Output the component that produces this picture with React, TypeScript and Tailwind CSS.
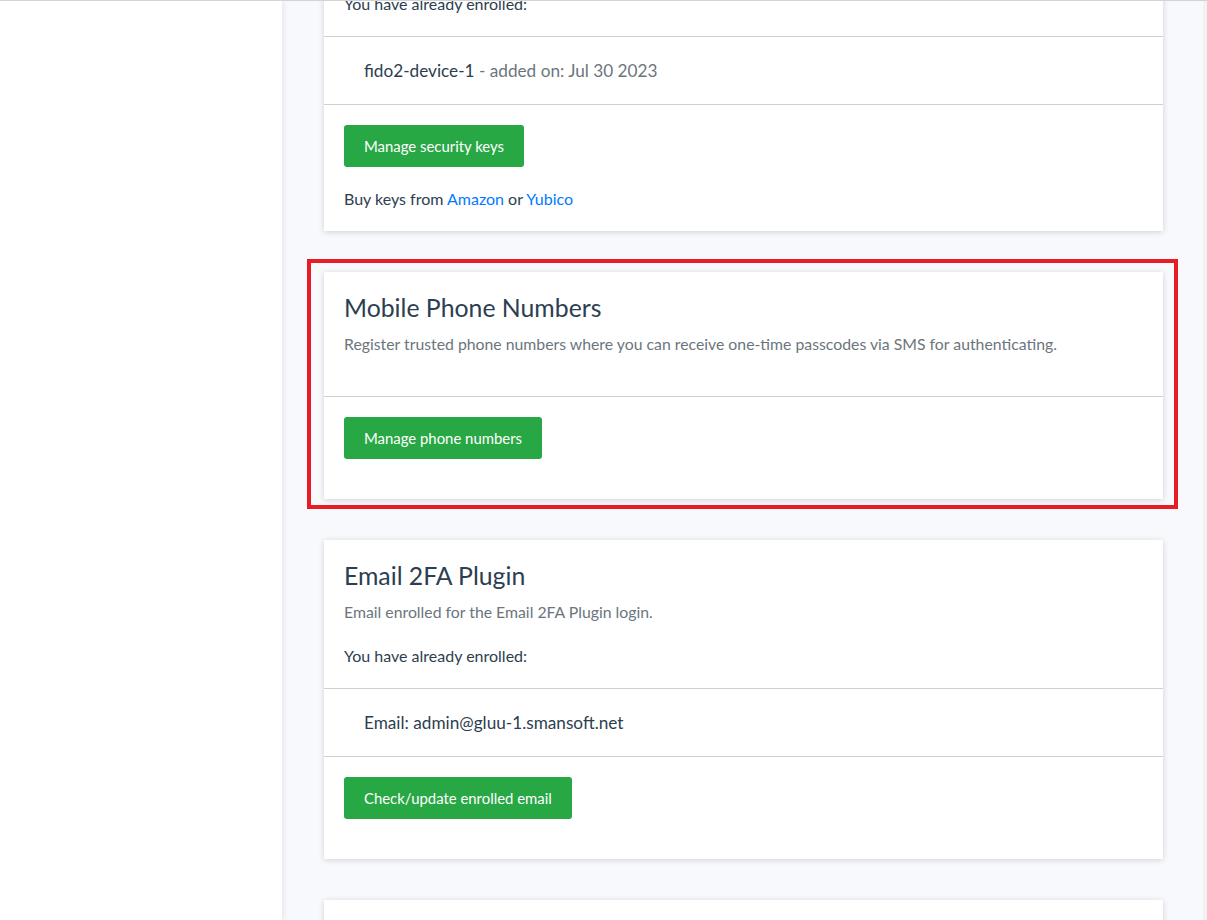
import type { ReactNode } from "react";

type CardProps = {
  title: string;
  description: string;
  enrolled?: boolean;
  item?: ReactNode;
  button: string;
  footer?: ReactNode;
};

function Card({ title, description, enrolled, item, button, footer }: CardProps) {
  return (
    <div className="bg-white shadow-[0_1px_6px_rgba(0,0,0,0.16)]">
      <div className="px-5 pt-5 pb-5">
        <h4 className="m-0 mb-[9px] text-[24.8px] leading-[31px] font-normal text-[#2c3e50]">
          {title}
        </h4>
        <p className="mb-5 text-[15.8px] leading-6 text-[#6c757d]">{description}</p>
        {enrolled && (
          <p className="text-[16px] leading-6 text-[#2c3e50]">You have already enrolled:</p>
        )}
      </div>
      {item && (
        <div className="border-t border-[#d0d0d0] px-10 py-5 text-[17.2px] leading-[27px] text-[#2c3e50]">
          {item}
        </div>
      )}
      <div className="border-t border-[#d0d0d0] px-5 pt-5 pb-5">
        <button className="mb-5 flex h-[42px] items-center rounded-[3px] bg-[#28a745] px-5 text-[14.9px] text-white">
          {button}
        </button>
        {footer && <p className="text-[16px] leading-6 text-[#2c3e50]">{footer}</p>}
      </div>
    </div>
  );
}

export default function App() {
  return (
    <div
      className="flex h-[920px] overflow-hidden border-t border-[#d3d3d3] bg-[#f8f9fc]"
      style={{ fontFamily: "Lato, 'Noto Sans', sans-serif" }}
    >
      <aside className="relative z-10 w-[282px] shrink-0 bg-white shadow-[2px_0_5px_rgba(0,0,0,0.07)]" />

      <main className="flex-1 pl-[42px] pr-10">
        <div className="-mt-[113px] flex flex-col gap-[41px]">
          <Card
            title="Security Keys"
            description="FIDO2 security keys enrolled for two-factor authentication."
            enrolled
            item={
              <>
                fido2-device-1<span className="text-[#6c757d]"> - added on: Jul 30 2023</span>
              </>
            }
            button="Manage security keys"
            footer={
              <>
                Buy keys from <a className="text-[#007bff]">Amazon</a> or{" "}
                <a className="text-[#007bff]">Yubico</a>
              </>
            }
          />

          <div className="relative">
            <Card
              title="Mobile Phone Numbers"
              description="Register trusted phone numbers where you can receive one-time passcodes via SMS for authenticating."
              button="Manage phone numbers"
            />
            <div className="pointer-events-none absolute -top-[13px] -right-[15px] -bottom-[10px] -left-[17px] border-4 border-[#e81c24]" />
          </div>

          <Card
            title="Email 2FA Plugin"
            description="Email enrolled for the Email 2FA Plugin login."
            enrolled
            item={<>Email: admin@gluu-1.smansoft.net</>}
            button="Check/update enrolled email"
          />

          <Card
            title="OTP Tokens"
            description="Generate one-time passwords with a mobile app or hardware token."
            button="Manage OTP tokens"
          />
        </div>
      </main>

      <div className="w-1 shrink-0 bg-[#f2f2f2]" />
    </div>
  );
}
